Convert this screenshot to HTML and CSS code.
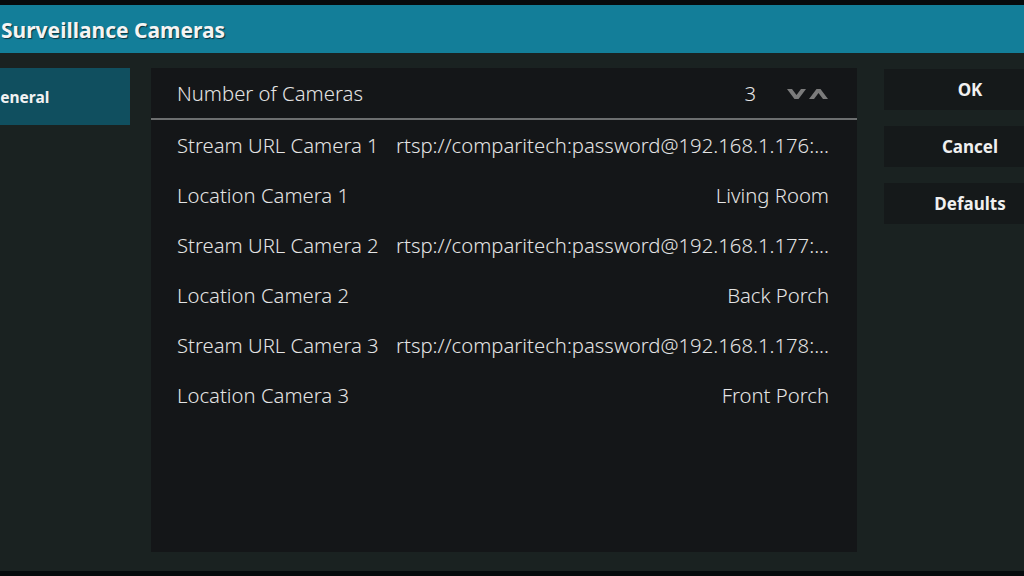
FILE: index.html
```html
<!DOCTYPE html>
<html>
<head>
<meta charset="utf-8">
<link rel="stylesheet" href="styles.css">
</head>
<body>
<div class="topstrip"></div>
<header class="titlebar"><h1 class="title">Surveillance Cameras</h1></header>
<main class="content">
  <nav class="sidebar">
    <div class="tab active">General</div>
  </nav>
  <section class="panel">
    <div class="row head">
      <span class="label">Number of Cameras</span>
      <span class="spin">
        <span class="num">3</span>
        <svg class="arrows" width="42" height="12" viewBox="0 0 42 12">
          <path d="M0 1 L5 1 L9.5 7 L14 1 L19 1 L11.5 11 L7.5 11 Z" fill="#7b7b7b"/>
          <path d="M22 11 L27 11 L31.5 5 L36 11 L41 11 L33.5 1 L29.5 1 Z" fill="#7b7b7b"/>
        </svg>
      </span>
    </div>
    <div class="divider"></div>
    <div class="row"><span class="label">Stream URL Camera 1</span><span class="value">rtsp://comparitech:password@192.168.1.176:...</span></div>
    <div class="row"><span class="label">Location Camera 1</span><span class="value">Living Room</span></div>
    <div class="row"><span class="label">Stream URL Camera 2</span><span class="value">rtsp://comparitech:password@192.168.1.177:...</span></div>
    <div class="row"><span class="label">Location Camera 2</span><span class="value">Back Porch</span></div>
    <div class="row"><span class="label">Stream URL Camera 3</span><span class="value">rtsp://comparitech:password@192.168.1.178:...</span></div>
    <div class="row"><span class="label">Location Camera 3</span><span class="value">Front Porch</span></div>
  </section>
  <aside class="buttons">
    <div class="btn">OK</div>
    <div class="btn">Cancel</div>
    <div class="btn">Defaults</div>
  </aside>
</main>
<div class="bottomstrip"></div>
</body>
</html>
```
FILE: styles.css
```css
html, body {
  margin: 0;
  padding: 0;
  width: 1024px;
  height: 576px;
  overflow: hidden;
  background: #1a2221;
  font-family: "Noto Sans", "Open Sans", sans-serif;
  color: #e6e6e6;
}
.topstrip {
  height: 5px;
  background: #070b0d;
}
.titlebar {
  height: 48px;
  background: #137e99;
  display: flex;
  align-items: center;
}
.title {
  margin: 1px 0 0 0;
  padding-left: 1px;
  font-size: 21px;
  font-weight: 700;
  color: #f4f4f4;
  text-shadow: 1px 1px 1px rgba(0,0,0,0.6);
}
.content {
  display: flex;
  align-items: flex-start;
  height: 518px;
  padding-top: 15px;
  box-sizing: border-box;
}
.sidebar {
  width: 130px;
  flex: none;
  margin-right: 21px;
}
.tab {
  height: 57px;
  display: flex;
  align-items: center;
  font-size: 15.5px;
  font-weight: 700;
  text-indent: -11px;
  overflow: hidden;
  white-space: nowrap;
}
.tab.active {
  background: #104f5f;
  color: #f2f2f2;
}
.panel {
  width: 706px;
  height: 484px;
  flex: none;
  background: #141618;
  margin-right: 27px;
}
.row {
  height: 50px;
  display: flex;
  align-items: center;
  padding: 0 28px 0 26px;
  font-size: 20.3px;
  font-weight: 300;
  white-space: nowrap;
}
.row .label {
  flex: none;
  color: #e4e4e4;
}
.row .value {
  flex: 1;
  min-width: 0;
  overflow: hidden;
  text-align: right;
  color: #e4e4e4;
  padding-left: 12px;
}
.row.head .label {
  flex: 1;
}
.spin {
  display: flex;
  align-items: center;
}
.num {
  margin-right: 31px;
}
.arrows {
  display: block;
  margin-top: 1px;
}
.divider {
  height: 2px;
  background: #6c6e6f;
}
.buttons {
  width: 172px;
  flex: none;
  display: flex;
  flex-direction: column;
  gap: 16px;
  padding-top: 1px;
}
.btn {
  height: 41px;
  background: #15191a;
  display: flex;
  align-items: center;
  justify-content: center;
  font-size: 17px;
  font-weight: 700;
  color: #f0f0f0;
}
.bottomstrip {
  height: 5px;
  background: #050a0c;
}
```
